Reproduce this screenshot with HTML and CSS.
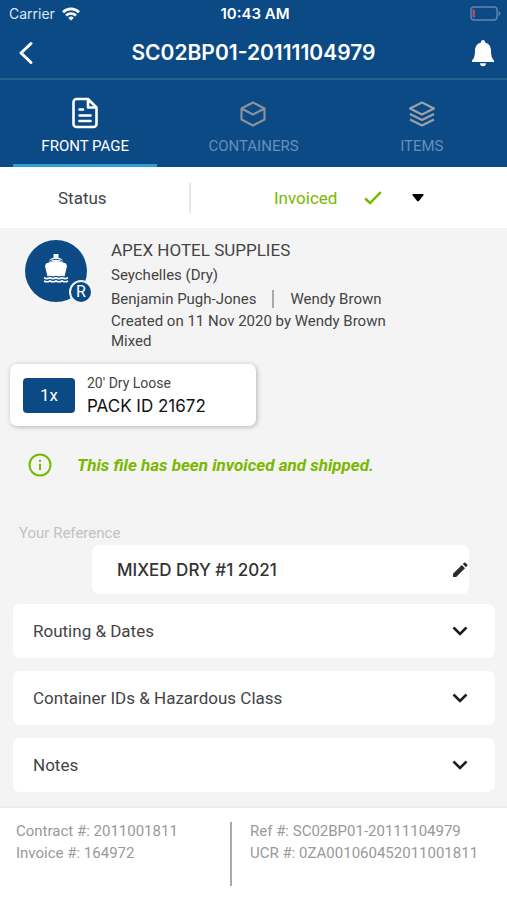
FILE: index.html
```html
<!DOCTYPE html>
<html lang="en">
<head>
<meta charset="utf-8">
<meta name="viewport" content="width=device-width, initial-scale=1">
<title>SC02BP01-20111104979</title>
<link rel="stylesheet" href="styles.css">
</head>
<body>
<div class="app">
  <header class="top">
    <div class="system">
      <div class="carrier">Carrier
        <svg width="18" height="14" viewBox="0 0 18 14" fill="none" stroke="#fff" stroke-width="2.6"><path d="M1 5.2a11.4 11.4 0 0 1 16 0M4 8.5a7.2 7.2 0 0 1 10 0"/><path d="M9 13.6 6.3 10.9a3.8 3.8 0 0 1 5.4 0z" fill="#fff" stroke="none"/></svg>
      </div>
      <div class="time">10:43 AM</div>
      <svg class="battery" width="31" height="15" viewBox="0 0 31 15"><rect x="1" y="1" width="26" height="13" rx="3" fill="none" stroke="#5f89b3" stroke-width="1.4"/><path d="M28.5 5v5q2-1 2-2.500t-2-2.500z" fill="#5f89b3"/><rect x="2.500" y="3.500" width="2.500" height="8" rx="1" fill="#b34b69"/></svg>
    </div>
    <div class="titlebar">
      <button class="icon-button" aria-label="Back"><svg width="16" height="24" viewBox="0 0 16 24" fill="none" stroke="currentColor" stroke-width="3" stroke-linecap="round" stroke-linejoin="round"><path d="M13 2.500 3 12l10 9.500"/></svg></button>
      <h1>SC02BP01-20111104979</h1>
      <button class="icon-button end" aria-label="Notifications"><svg width="24" height="28" viewBox="0 0 24 28" fill="currentColor"><path d="M12 1a2 2 0 0 0-2 2v.6C6.400 4.500 4 7.600 4 11.500c0 5-.8 8-3 10V23h22v-1.500c-2.200-2-3-5-3-10 0-3.900-2.400-7-6-7.900V3a2 2 0 0 0-2-2zM9 24.200h6a3 3 0 0 1-6 0z"/></svg></button>
    </div>
    <nav class="tabs">
      <a class="tab active" href="#front" aria-current="page">
        <svg width="28" height="32" viewBox="0 0 28 32" fill="none" stroke="currentColor" stroke-width="2.600" stroke-linecap="round" stroke-linejoin="round"><path d="M17 2H5.500A3 3 0 0 0 2.500 5v22a3 3 0 0 0 3 3h17a3 3 0 0 0 3-3V10.500zM17 2v8.500h8.500M8.500 12.500H12M8.500 18.500h11M8.500 24h11"/></svg>
        <span>FRONT PAGE</span>
      </a>
      <a class="tab" href="#containers">
        <svg width="28" height="28" viewBox="0 -2 28 28" fill="none" stroke="#8b929b" stroke-width="2.100" stroke-linejoin="round"><path d="M14 1.500 25.500 7.500v11L14 24.500 2.500 18.500v-11zM2.500 7.500 14 13.500l11.500-6"/></svg>
        <span>CONTAINERS</span>
      </a>
      <a class="tab" href="#items">
        <svg width="28" height="28" viewBox="0 -2 28 28" fill="none" stroke="#9aa2ab" stroke-width="2.100" stroke-linejoin="round"><path d="M14 1.500 26 7.500 14 13.500 2 7.500zM2 13l12 6 12-6M2 18.500l12 6 12-6"/></svg>
        <span>ITEMS</span>
      </a>
    </nav>
  </header>

  <div class="status">
    <label for="status">Status</label>
    <div class="picker">
      <select id="status"><option>Invoiced</option></select>
      <span class="marks">
        <svg width="18" height="14" viewBox="0 0 18 14" fill="none" stroke="#7ab800" stroke-width="2.400"><path d="M1.200 7.500 6 12 16.800 1.200"/></svg>
        <svg width="12" height="8" viewBox="0 0 12 8"><path d="M1.200 0h9.600q1.200.3.600 1.300L6.900 7q-.9.900-1.800 0L.6 1.300Q0 .3 1.200 0z"/></svg>
      </span>
    </div>
  </div>

  <main class="content">
    <section class="customer">
      <div class="avatar">
        <svg width="26" height="30" viewBox="0 0 26 30" fill="#fff"><path d="M10.500 1h5v4h-5z"/><path d="M5.500 8.500C7 5.800 9 4.500 13 4.500s6 1.300 7.500 4z"/><path d="M5.500 8.200Q13 4.600 20.500 8.200" fill="none" stroke="#0c4a85" stroke-width=".9"/><path d="M3 10.500Q13 5.500 23 10.500l1 2.500-2.500 10.500h-17L2 13z"/><path d="M1 24q3 2 6 0 3 2 6 0 3 2 6 0 3 2 6 0" fill="none" stroke="#0c4a85" stroke-width="2.400"/><path d="M1 24.800q3 1.500 6 0 3 1.500 6 0 3 1.500 6 0 3 1.500 6 0M1 28q3 1.500 6 0 3 1.500 6 0 3 1.500 6 0 3 1.500 6 0" fill="none" stroke="#fff" stroke-width="1.700"/></svg>
        <span class="badge">R</span>
      </div>
      <div class="details">
        <h2>APEX HOTEL SUPPLIES</h2>
        <p>Seychelles (Dry)</p>
        <p class="people"><span>Benjamin Pugh-Jones</span><span>Wendy Brown</span></p>
        <p>Created on 11 Nov 2020 by Wendy Brown</p>
        <p class="kind">Mixed</p>
      </div>
    </section>

    <section class="pack">
      <span class="count">1x</span>
      <div>
        <p class="pack-type">20' Dry Loose</p>
        <p class="pack-id">PACK ID 21672</p>
      </div>
    </section>

    <p class="notice">
      <svg width="24" height="24" viewBox="0 0 24 24" fill="none" stroke="currentColor" stroke-width="2"><circle cx="12" cy="12" r="10.500"/><path d="M12 10.800v6.200M12 6.800v2"/></svg>
      <span>This file has been invoiced and shipped.</span>
    </p>

    <div class="reference">
      <label for="reference">Your Reference</label>
      <div class="field">
        <input id="reference" type="text" value="MIXED DRY #1 2021">
        <svg width="16" height="16" viewBox="0 0 16 16" fill="#2c2c2c"><path d="M1 11.800 9.800 3l3.200 3.200L4.200 15H1zM10.800 2l1.300-1.200q.7-.6 1.400 0l1.700 1.700q.6.700 0 1.400L14 5.200z"/></svg>
      </div>
    </div>

    <div class="panels">
      <button class="panel" aria-expanded="false">Routing &amp; Dates<svg class="chevron" width="16" height="10" viewBox="0 0 16 10"><path d="M1.500 1.500 8 8l6.500-6.500"/></svg></button>
      <button class="panel" aria-expanded="false">Container IDs &amp; Hazardous Class<svg class="chevron" width="16" height="10" viewBox="0 0 16 10"><path d="M1.500 1.500 8 8l6.500-6.500"/></svg></button>
      <button class="panel" aria-expanded="false">Notes<svg class="chevron" width="16" height="10" viewBox="0 0 16 10"><path d="M1.500 1.500 8 8l6.500-6.500"/></svg></button>
    </div>
  </main>

  <footer class="footer">
    <div><p>Contract #: 2011001811</p><p>Invoice #: 164972</p></div>
    <div><p>Ref #: SC02BP01-20111104979</p><p>UCR #: 0ZA001060452011001811</p></div>
  </footer>
</div>
</body>
</html>
```
FILE: styles.css
```css
* { box-sizing: border-box; }
body, h1, h2, p { margin: 0; }
body { font-family: Roboto, sans-serif; color: #444; background: #f4f4f4; }
button, input, select { font: inherit; color: inherit; border: 0; background: none; padding: 0; margin: 0; }
svg { display: block; flex: none; }

.app { min-height: 100vh; display: flex; flex-direction: column; }

.top { background: #0c4a85; color: #fff; }
.system { display: grid; grid-template-columns: 1fr auto 1fr; align-items: center; height: 27px; padding: 0 6px 0 9px; font: 14px Inter, sans-serif; }
.carrier { display: flex; align-items: center; gap: 7px; color: #dbe7f2; }
.time { font-size: 15px; font-weight: 600; }
.battery { justify-self: end; }
.titlebar { display: grid; grid-template-columns: 40px 1fr 46px; align-items: center; height: 53px; padding: 0 12px 0 18px; border-bottom: 2px solid #21628f; }
.titlebar h1 { font: 600 21px Inter, sans-serif; text-align: center; }
.icon-button { color: #fff; display: flex; }
.icon-button.end { justify-self: end; }

.tabs { display: grid; grid-template-columns: repeat(3, 1fr); padding: 0 1px; height: 87px; }
.tab { display: grid; grid-template-rows: 34px 20px; row-gap: 6px; align-items: center; justify-items: center; margin: 0 12px; padding-top: 16px; color: #668fb9; font-size: 15px; text-decoration: none; border-bottom: 3px solid transparent; }
.tab.active { color: #fff; border-bottom-color: #2b9fd9; }

.status { display: grid; grid-template-columns: 191px 1fr; align-items: center; height: 61px; background: #fff; font-size: 17px; }
.status label { padding: 5px 0 5px 58px; border-right: 2px solid #e6e6e6; }
.picker { display: grid; justify-self: start; align-items: center; margin-left: 83px; }
.picker > * { grid-area: 1 / 1; }
.picker select { appearance: none; color: #7ab800; padding-right: 86px; }
.marks { display: flex; gap: 30px; align-items: center; justify-self: end; pointer-events: none; }

.content { flex: 1; }
.customer { display: flex; gap: 24px; padding: 12px 24px 0; }
.avatar { position: relative; flex: none; display: grid; place-items: center; width: 62px; height: 62px; margin-left: 1px; padding-bottom: 6px; border-radius: 50%; background: #0c4a85; }
.badge { position: absolute; right: -6px; bottom: -2px; width: 24px; height: 24px; border: 2px solid #f4f4f4; border-radius: 50%; background: #0c4a85; color: #fff; font-size: 16px; line-height: 20px; text-align: center; }
.details { font-size: 15px; line-height: 23px; }
.details h2 { font-size: 17px; font-weight: 400; line-height: 20px; margin-bottom: 4px; }
.people { display: flex; align-items: center; height: 23px; }
.people span { line-height: 18px; }
.people span + span { margin-left: 15px; padding-left: 17px; border-left: 2px solid #aaa; }
.details .kind { line-height: 16px; }

.pack { display: flex; align-items: center; gap: 12px; width: 246px; height: 62px; margin: 15px 0 0 10px; padding: 0 13px; border-radius: 7px; background: #fff; box-shadow: 1px 1px 5px #0004; }
.pack > div { padding-top: 2px; }
.count { display: grid; place-items: center; width: 52px; height: 35px; border-radius: 4px; background: #0c4a85; color: #fff; font-size: 17px; }
.pack-type { font-size: 14px; line-height: 20px; }
.pack-id { font: 17px/26px Inter, sans-serif; color: #111; }

.notice { display: flex; align-items: center; gap: 25px; margin: 27px 28px 0; color: #7ab800; font-size: 17px; font-weight: 700; font-style: italic; }

.reference { margin-top: 46px; padding: 0 38px 0 19px; }
.reference label { display: block; color: #c2c2c2; font-size: 15px; line-height: 20px; }
.field { display: flex; align-items: center; height: 49px; margin: 2px 0 0 73px; padding: 0 1px 0 25px; border-radius: 7px; background: #fff; }
.field input { flex: 1; min-width: 0; color: #333; font: 500 17px Inter, sans-serif; }

.panels { display: grid; gap: 13px; padding: 10px 12px 14px 13px; }
.panel { display: flex; align-items: center; justify-content: space-between; height: 54px; padding: 0 27px 0 20px; border-radius: 7px; background: #fff; font-size: 17px; text-align: left; }
.chevron { fill: none; stroke: #1c1c1c; stroke-width: 2.5; }

.footer { display: grid; grid-template-columns: 216px 1fr; min-height: 94px; padding: 14px 16px; border-top: 2px solid #ececec; background: #fff; color: #999; font-size: 15px; line-height: 18px; }
.footer div { height: 64px; }
.footer p + p { margin-top: 4px; }
.footer div + div { padding-left: 18px; border-left: 2px solid #aaa; margin-left: -2px; }
```
